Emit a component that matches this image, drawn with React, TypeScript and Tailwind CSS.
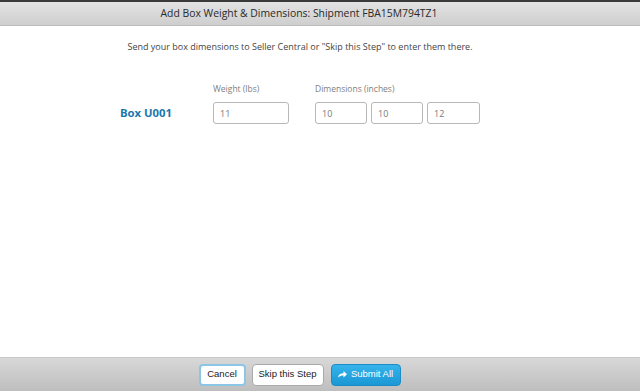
import React from "react";

export default function App() {
  const sans = { fontFamily: '"Open Sans", "Liberation Sans", sans-serif' };
  return (
    <div className="w-[640px] h-[391px] flex flex-col bg-white overflow-hidden" style={sans}>
      <div className="h-[2px] bg-[#3a3a3a]" />
      <div className="h-[24px] flex items-center justify-center pr-[42px] bg-gradient-to-b from-[#e3e3e3] to-[#cecece] border-b border-[#bdbdbd]">
        <span className="text-[10.4px] text-[#2a2a2a]">Add Box Weight &amp; Dimensions: Shipment FBA15M794TZ1</span>
      </div>
      <div className="flex-1 flex flex-col">
        <div className="pt-[14px] pr-[40px] text-center text-[9px] text-[#444]">
          Send your box dimensions to Seller Central or "Skip this Step" to enter them there.
        </div>
        <div className="mt-[29px] pl-[213px] flex text-[8.5px] text-[#808080]">
          <div className="w-[102px]">Weight (lbs)</div>
          <div>Dimensions (inches)</div>
        </div>
        <div className="mt-[7px] pl-[120px] flex items-center">
          <div className="w-[93px] text-[11.3px] font-bold text-[#1b78ad]">Box U001</div>
          <div className="w-[76px] h-[22px] border border-[#b8b8b8] rounded-[3px] flex items-center pl-[6px] text-[9px] text-[#777]">11</div>
          <div className="ml-[26px] flex gap-[4px]">
            <div className="w-[52px] h-[22px] border border-[#b8b8b8] rounded-[3px] flex items-center pl-[6px] text-[9px] text-[#777]">10</div>
            <div className="w-[52px] h-[22px] border border-[#b8b8b8] rounded-[3px] flex items-center pl-[6px] text-[9px] text-[#777]">10</div>
            <div className="w-[53px] h-[22px] border border-[#b8b8b8] rounded-[3px] flex items-center pl-[6px] text-[9px] text-[#777]">12</div>
          </div>
        </div>
      </div>
      <div
        className="h-[34px] flex items-center justify-center pr-[41px] gap-[6px] bg-gradient-to-b from-[#d8d8d8] to-[#bebebe] border-t border-[#c9c9c9]"
        style={{ fontFamily: '"Liberation Sans", Arial, sans-serif' }}
      >
        <button className="w-[47px] h-[22px] rounded-[4px] bg-white border-2 border-[#8cc6e6] text-[9.5px] text-[#222] flex items-center justify-center">Cancel</button>
        <button className="w-[72px] h-[22px] rounded-[4px] bg-white border border-[#aaa] text-[9.5px] text-[#222] flex items-center justify-center">Skip this Step</button>
        <button className="ml-[1px] w-[70px] h-[22px] rounded-[4px] bg-gradient-to-b from-[#35b3ea] to-[#1a98d5] border border-[#1b8cc4] text-[9.5px] text-white flex items-center justify-center gap-[4px]">
          <svg width="9" height="7" viewBox="0 0 9 7" fill="white">
            <path d="M0 6.5 C0.5 3.5 2.5 2.2 5.5 2.2 V0 L9 3.3 L5.5 6.6 V4.4 C3.2 4.4 1.5 5 0 6.5Z" />
          </svg>
          Submit All
        </button>
      </div>
    </div>
  );
}
